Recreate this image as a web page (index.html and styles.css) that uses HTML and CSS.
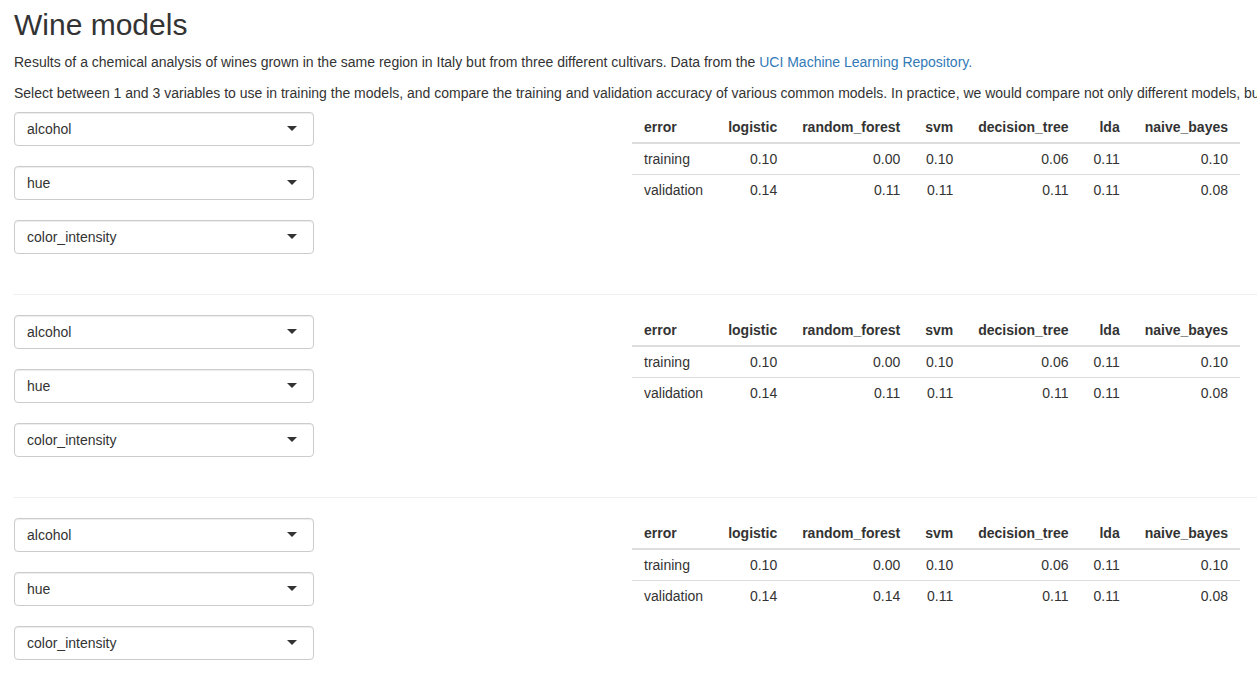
FILE: index.html
```html
<!DOCTYPE html>
<html>
<head>
<meta charset="utf-8">
<title>Wine models</title>
<link rel="stylesheet" href="styles.css">
</head>
<body>
<div class="page">
  <h2 class="title">Wine models</h2>
  <p class="intro">Results of a chemical analysis of wines grown in the same region in Italy but from three different cultivars. Data from the <a href="#">UCI Machine Learning Repository.</a></p>
  <p class="nowrap">Select between 1 and 3 variables to use in training the models, and compare the training and validation accuracy of various common models. In practice, we would compare not only different models, but also different sets of variables.</p>

  <div class="section">
    <div class="inputs">
      <div class="select"><span>alcohol</span><span class="caret"></span></div>
      <div class="select"><span>hue</span><span class="caret"></span></div>
      <div class="select"><span>color_intensity</span><span class="caret"></span></div>
    </div>
    <div class="results">
      <table class="tbl">
        <thead>
          <tr><th class="l">error</th><th>logistic</th><th>random_forest</th><th>svm</th><th>decision_tree</th><th>lda</th><th>naive_bayes</th></tr>
        </thead>
        <tbody>
          <tr><td class="l">training</td><td>0.10</td><td>0.00</td><td>0.10</td><td>0.06</td><td>0.11</td><td>0.10</td></tr>
          <tr><td class="l">validation</td><td>0.14</td><td>0.11</td><td>0.11</td><td>0.11</td><td>0.11</td><td>0.08</td></tr>
        </tbody>
      </table>
    </div>
  </div>
  <hr class="sep">

  <div class="section">
    <div class="inputs">
      <div class="select"><span>alcohol</span><span class="caret"></span></div>
      <div class="select"><span>hue</span><span class="caret"></span></div>
      <div class="select"><span>color_intensity</span><span class="caret"></span></div>
    </div>
    <div class="results">
      <table class="tbl">
        <thead>
          <tr><th class="l">error</th><th>logistic</th><th>random_forest</th><th>svm</th><th>decision_tree</th><th>lda</th><th>naive_bayes</th></tr>
        </thead>
        <tbody>
          <tr><td class="l">training</td><td>0.10</td><td>0.00</td><td>0.10</td><td>0.06</td><td>0.11</td><td>0.10</td></tr>
          <tr><td class="l">validation</td><td>0.14</td><td>0.11</td><td>0.11</td><td>0.11</td><td>0.11</td><td>0.08</td></tr>
        </tbody>
      </table>
    </div>
  </div>
  <hr class="sep">

  <div class="section">
    <div class="inputs">
      <div class="select"><span>alcohol</span><span class="caret"></span></div>
      <div class="select"><span>hue</span><span class="caret"></span></div>
      <div class="select"><span>color_intensity</span><span class="caret"></span></div>
    </div>
    <div class="results">
      <table class="tbl">
        <thead>
          <tr><th class="l">error</th><th>logistic</th><th>random_forest</th><th>svm</th><th>decision_tree</th><th>lda</th><th>naive_bayes</th></tr>
        </thead>
        <tbody>
          <tr><td class="l">training</td><td>0.10</td><td>0.00</td><td>0.10</td><td>0.06</td><td>0.11</td><td>0.10</td></tr>
          <tr><td class="l">validation</td><td>0.14</td><td>0.14</td><td>0.11</td><td>0.11</td><td>0.11</td><td>0.08</td></tr>
        </tbody>
      </table>
    </div>
  </div>
  <hr class="sep">
</div>
</body>
</html>
```
FILE: styles.css
```css
html, body {
  margin: 0;
  padding: 0;
  background: #fff;
  overflow-x: hidden;
}
body {
  font-family: "Liberation Sans", Arial, sans-serif;
  font-size: 14px;
  line-height: 20px;
  color: #333;
}
.page {
  width: max-content;
  min-width: 100%;
  box-sizing: border-box;
  padding: 0 14px;
}
.title {
  font-size: 30px;
  font-weight: normal;
  line-height: 33px;
  margin: 8px 0 11px;
}
p {
  margin: 0 0 9px;
}
.intro {
  margin-bottom: 11px;
}
.nowrap {
  white-space: nowrap;
}
a {
  color: #337ab7;
  text-decoration: none;
}
.section {
  display: grid;
  grid-template-columns: 618px auto;
  align-items: start;
}
.inputs {
  display: flex;
  flex-direction: column;
  gap: 20px;
  padding-bottom: 20px;
}
.select {
  position: relative;
  width: 300px;
  height: 34px;
  box-sizing: border-box;
  border: 1px solid #ccc;
  border-radius: 4px;
  box-shadow: inset 0 1px 1px rgba(0,0,0,0.075);
  padding: 6px 12px;
  display: flex;
  align-items: center;
  color: #333;
}
.caret {
  position: absolute;
  right: 16px;
  top: 50%;
  margin-top: -3px;
  width: 0;
  height: 0;
  border-style: solid;
  border-width: 5px 5px 0 5px;
  border-color: #333 transparent transparent transparent;
}
.tbl {
  border-collapse: collapse;
  border-spacing: 0;
}
.tbl th, .tbl td {
  padding: 5px 12px 5px 13px;
  line-height: 20px;
  text-align: right;
  white-space: nowrap;
}
.tbl th.l, .tbl td.l {
  padding-left: 12px;
}
.tbl th {
  font-weight: bold;
  border-bottom: 2px solid #ddd;
}
.tbl td {
  border-top: 1px solid #ddd;
}
.tbl .l {
  text-align: left;
}
.sep {
  border: 0;
  border-top: 1px solid #eee;
  margin: 20px 0;
}
```
